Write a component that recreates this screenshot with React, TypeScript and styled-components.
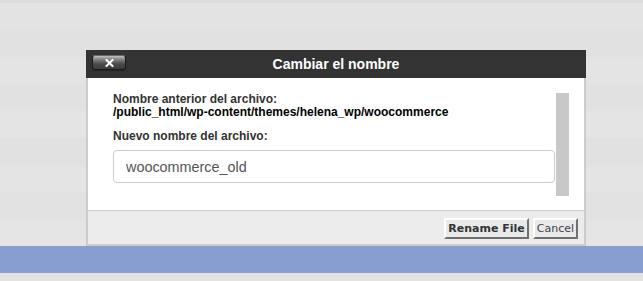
import React from "react";
import styled, { createGlobalStyle } from "styled-components";

const GlobalStyle = createGlobalStyle`
  html, body { margin: 0; padding: 0; }
  body {
    background: #e2e2e2;
    font-family: "Liberation Sans", Arial, sans-serif;
    overflow: hidden;
  }
`;

const Page = styled.div`
  position: relative;
  width: 643px;
  height: 281px;
  display: flex;
  flex-direction: column;
  overflow: hidden;
`;

const Band = styled.div<{ $h: number; $tone: string }>`
  height: ${(p) => p.$h}px;
  flex: none;
  background: ${(p) => p.$tone};
`;

const Dialog = styled.div`
  position: absolute;
  left: 86px;
  top: 50px;
  width: 500px;
  display: flex;
  flex-direction: column;
`;

const Header = styled.div`
  height: 28px;
  background: #333333;
  display: grid;
  grid-template-columns: 34px 1fr 34px;
  align-items: center;
  padding: 0 6px;
  box-sizing: border-box;
`;

const CloseButton = styled.button`
  width: 34px;
  height: 15px;
  margin-top: -3px;
  padding: 0;
  border: 1px solid #1c1c1c;
  border-top-color: #6a6a6a;
  border-radius: 3px;
  background: linear-gradient(
    to bottom,
    #c2c2c2 0px,
    #9a9a9a 2px,
    #6e6e6e 5px,
    #4a4a4a 8px,
    #3c3c3c 100%
  );
  box-shadow: 0 1px 0 rgba(20, 30, 40, 0.6);
  display: flex;
  align-items: center;
  justify-content: center;
  cursor: pointer;
`;

const Title = styled.div`
  color: #ffffff;
  font-weight: bold;
  font-size: 14px;
  line-height: 28px;
  text-align: center;
`;

const Frame = styled.div`
  border: 2px solid #cccccc;
  border-top: none;
  display: flex;
  flex-direction: column;
`;

const Body = styled.div`
  height: 132px;
  background: #ffffff;
  display: flex;
  padding: 15px 15px 0 25px;
  box-sizing: border-box;
  gap: 1px;
`;

const Content = styled.div`
  flex: 1;
  display: flex;
  flex-direction: column;
`;

const Label = styled.div<{ $dark?: boolean; $gap?: number }>`
  font-size: 12px;
  line-height: 13px;
  font-weight: bold;
  color: ${(p) => (p.$dark ? "#000000" : "#333333")};
  margin-top: ${(p) => p.$gap ?? 0}px;
  white-space: nowrap;
`;

const NameInput = styled.input`
  margin-top: 7px;
  height: 33px;
  box-sizing: border-box;
  width: 100%;
  border: 1px solid #cccccc;
  border-radius: 4px;
  padding: 0 12px;
  font-family: "Liberation Sans", Arial, sans-serif;
  font-size: 14.4px;
  color: #555555;
  background: #ffffff;
  outline: none;
`;

const ScrollBar = styled.div`
  width: 13px;
  height: 103px;
  flex: none;
  background: #c8c8c8;
`;

const Footer = styled.div`
  height: 34px;
  box-sizing: border-box;
  border-top: 1px solid #cccccc;
  background: #ececec;
  display: flex;
  justify-content: flex-end;
  align-items: flex-start;
  gap: 4px;
  padding: 7px 6px 0 0;
`;

const FooterButton = styled.button<{ $primary?: boolean }>`
  font-family: "DejaVu Sans", Verdana, sans-serif;
  font-size: 11px;
  line-height: 13px;
  font-weight: ${(p) => (p.$primary ? "bold" : "normal")};
  color: ${(p) => (p.$primary ? "#333333" : "#444444")};
  background: #e9e9e9;
  border: 2px solid;
  border-color: #ffffff #707070 #707070 #ffffff;
  padding: 2px 2px;
  height: 21px;
  box-sizing: border-box;
  border-radius: 0;
  cursor: pointer;
`;

const bands: Array<[number, string]> = [
  [3, "#dcdcdc"],
  [27, "#e3e3e3"],
  [27, "#e1e1e1"],
  [27, "#e4e4e4"],
  [27, "#e1e1e1"],
  [27, "#e4e4e4"],
  [27, "#e1e1e1"],
  [27, "#e4e4e4"],
  [27, "#e2e2e2"],
  [27, "#e5e5e5"],
  [27, "#889dd0"],
  [8, "#e3e3e3"],
];

export default function App() {
  return (
    <>
      <GlobalStyle />
      <Page>
        {bands.map(([h, c], i) => (
          <Band key={i} $h={h} $tone={c} />
        ))}
        <Dialog>
          <Header>
            <CloseButton aria-label="Cerrar">
              <svg width="9" height="8" viewBox="0 0 9 8">
                <path
                  d="M1.5 1 L7.5 7 M7.5 1 L1.5 7"
                  stroke="#ffffff"
                  strokeWidth="2"
                  strokeLinecap="square"
                />
              </svg>
            </CloseButton>
            <Title>Cambiar el nombre</Title>
            <span />
          </Header>
          <Frame>
            <Body>
              <Content>
                <Label>Nombre anterior del archivo:</Label>
                <Label $dark>/public_html/wp-content/themes/helena_wp/woocommerce</Label>
                <Label $gap={11}>Nuevo nombre del archivo:</Label>
                <NameInput defaultValue="woocommerce_old" />
              </Content>
              <ScrollBar />
            </Body>
            <Footer>
              <FooterButton $primary>Rename File</FooterButton>
              <FooterButton>Cancel</FooterButton>
            </Footer>
          </Frame>
        </Dialog>
      </Page>
    </>
  );
}
